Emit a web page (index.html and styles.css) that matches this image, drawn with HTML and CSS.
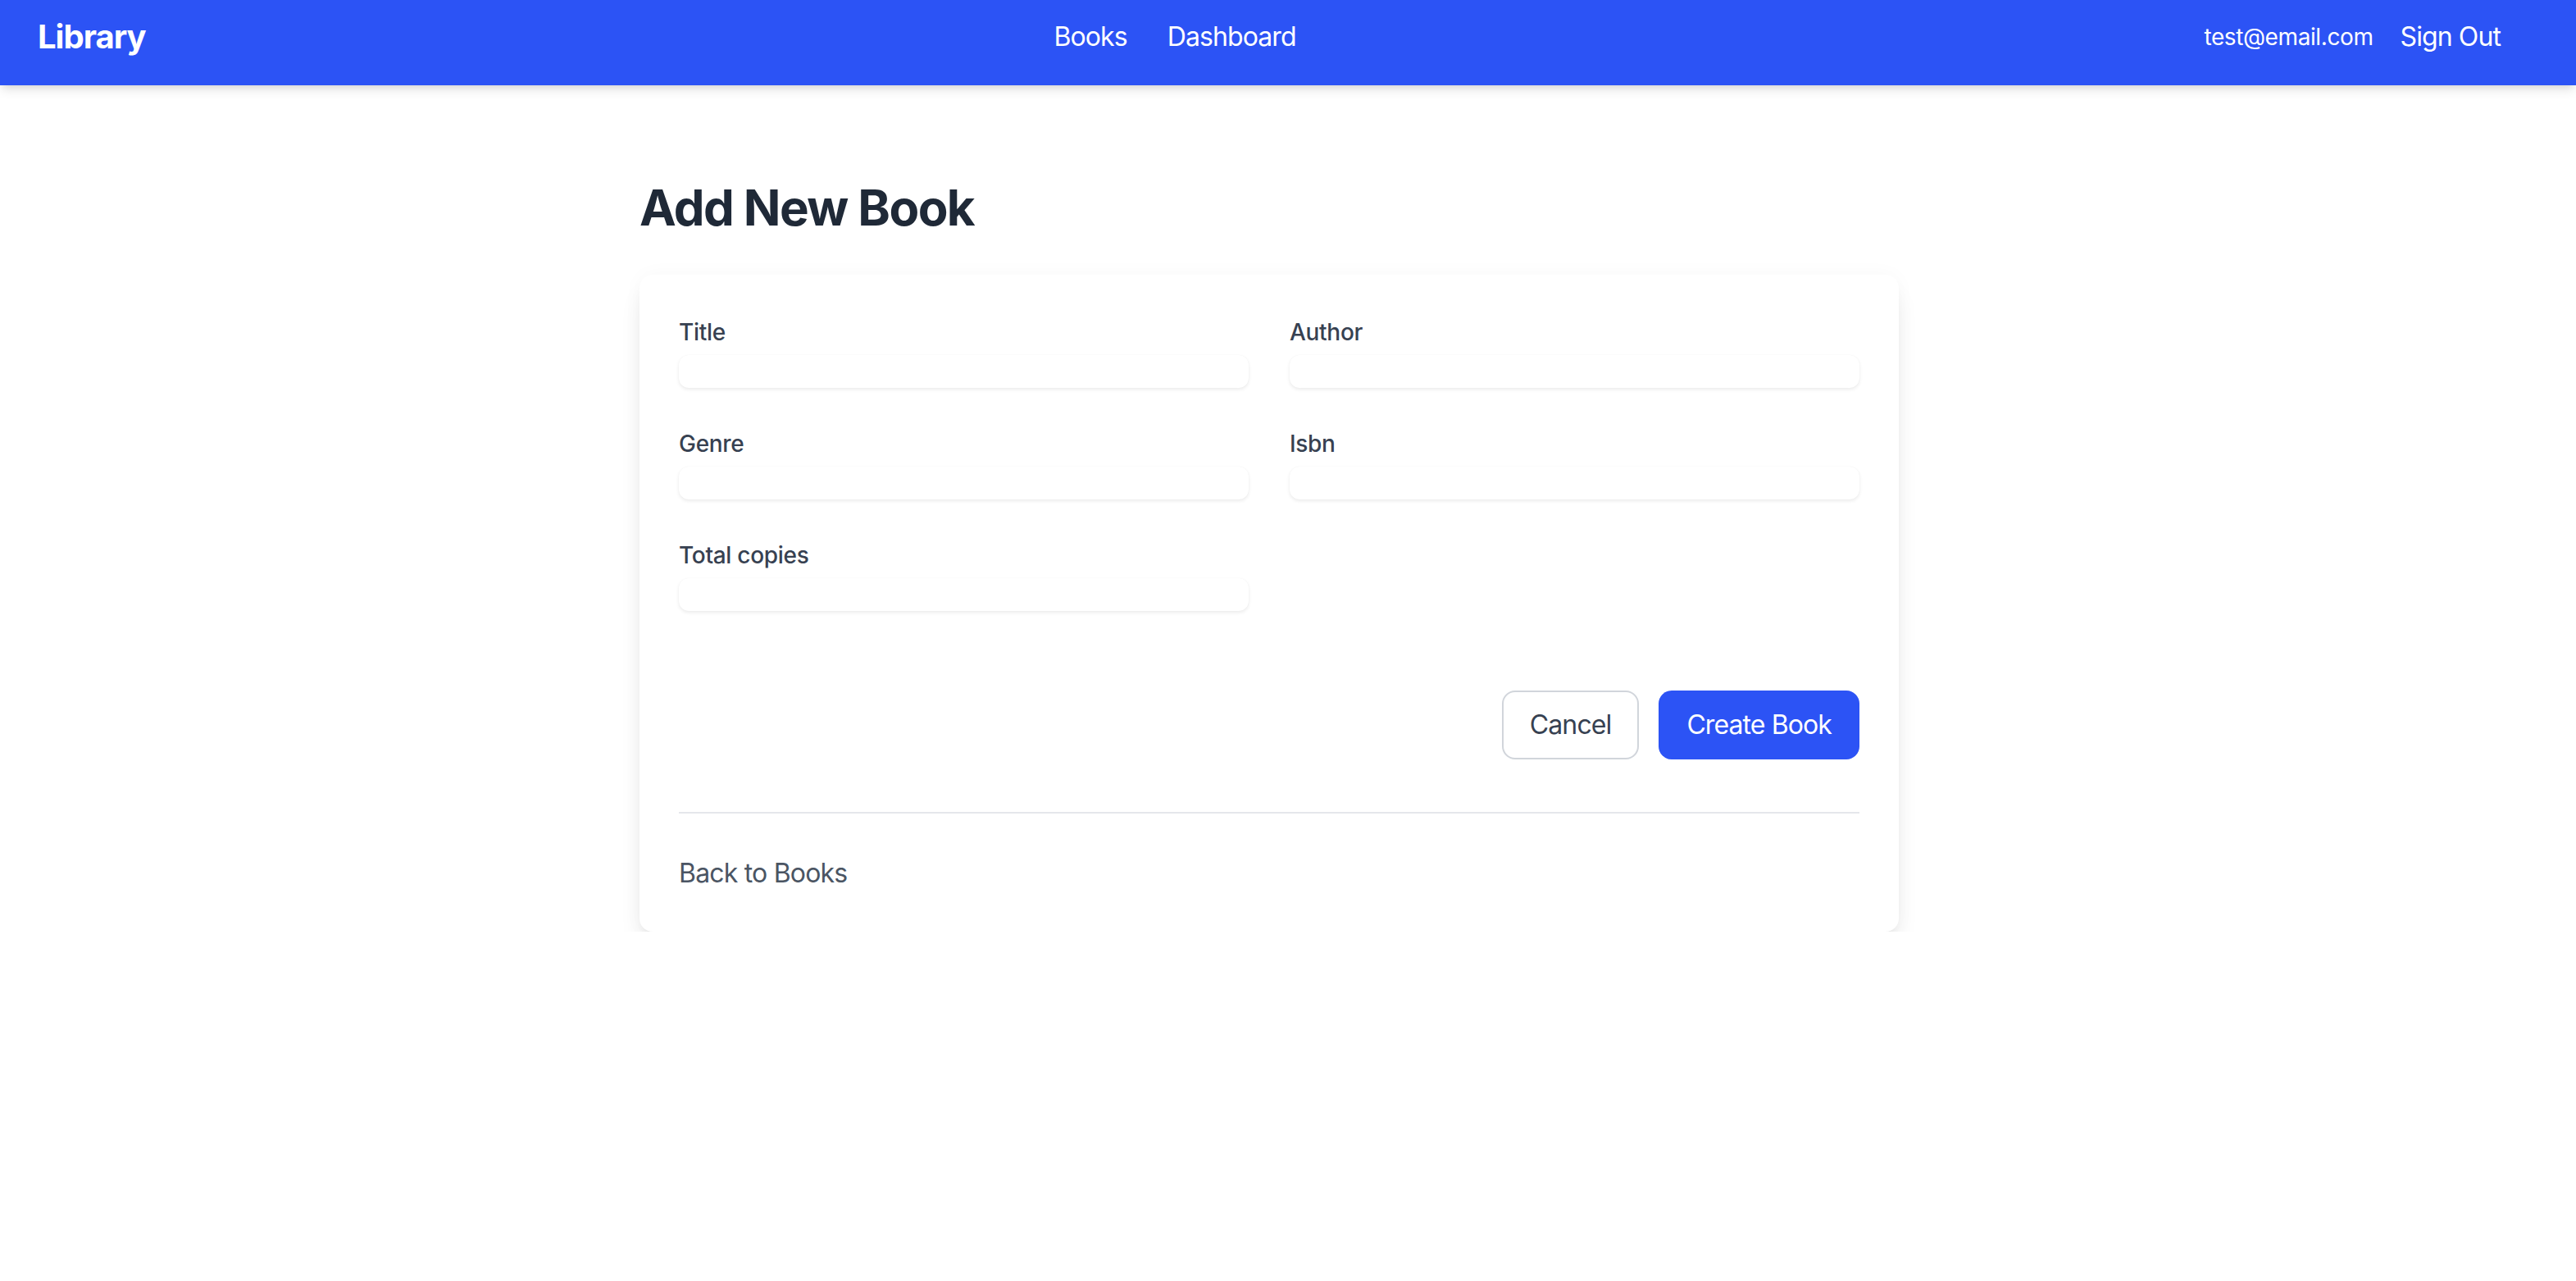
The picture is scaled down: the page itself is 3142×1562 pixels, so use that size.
FILE: index.html
```html
<!DOCTYPE html>
<html lang="en">
<head>
<meta charset="utf-8">
<title>Library - Add New Book</title>
<link rel="stylesheet" href="styles.css">
</head>
<body>
<header class="navbar">
  <a class="brand" href="#">Library</a>
  <nav class="nav-links">
    <a href="#">Books</a>
    <a href="#">Dashboard</a>
  </nav>
  <div class="nav-user">
    <span class="user-email">test@email.com</span>
    <a class="sign-out" href="#">Sign Out</a>
  </div>
</header>
<main class="main">
  <div class="container">
    <h1 class="page-title">Add New Book</h1>
    <section class="card">
      <form class="book-form">
        <div class="form-grid">
          <div class="field">
            <label for="title">Title</label>
            <input id="title" type="text">
          </div>
          <div class="field">
            <label for="author">Author</label>
            <input id="author" type="text">
          </div>
          <div class="field">
            <label for="genre">Genre</label>
            <input id="genre" type="text">
          </div>
          <div class="field">
            <label for="isbn">Isbn</label>
            <input id="isbn" type="text">
          </div>
          <div class="field">
            <label for="copies">Total copies</label>
            <input id="copies" type="text">
          </div>
        </div>
        <div class="actions">
          <a class="btn btn-secondary" href="#">Cancel</a>
          <button class="btn btn-primary" type="button">Create Book</button>
        </div>
      </form>
      <div class="card-footer">
        <a class="back-link" href="#">Back to Books</a>
      </div>
    </section>
  </div>
</main>
</body>
</html>
```

FILE: styles.css
```css
* { box-sizing: border-box; }
html, body { margin: 0; padding: 0; }
body {
  font-family: Inter, "Noto Sans", "Liberation Sans", sans-serif;
  background: #ffffff;
  color: #1f2937;
}
a { text-decoration: none; color: inherit; }

.navbar {
  height: 104px;
  background: #2c53f5;
  color: #ffffff;
  display: flex;
  align-items: center;
  justify-content: space-between;
  padding: 0 92px 14px 46px;
  box-shadow: 0 8px 12px -2px rgba(0,0,0,0.10), 0 4px 8px -4px rgba(0,0,0,0.10);
  position: relative;
  z-index: 1;
}
.brand {
  font-size: 40px;
  line-height: 56px;
  font-weight: 700;
  letter-spacing: -1px;
}
.nav-links {
  display: flex;
  gap: 49px;
  font-size: 32px;
  line-height: 48px;
  letter-spacing: -0.9px;
}
.nav-user {
  display: flex;
  align-items: center;
  gap: 33px;
}
.user-email {
  font-size: 28px;
  line-height: 40px;
  letter-spacing: -0.4px;
}
.sign-out {
  font-size: 32px;
  line-height: 48px;
  letter-spacing: -0.9px;
}

.main {
  padding: 113px 46px 0 0;
}
.container {
  width: 1536px;
  margin: 0 auto;
}
.page-title {
  margin: 0 0 46px;
  font-size: 60px;
  line-height: 72px;
  font-weight: 700;
  color: #1f2937;
  letter-spacing: -1.6px;
}
.card {
  background: #ffffff;
  border-radius: 16px;
  padding: 50px 48px 47px;
  box-shadow: 0 20px 30px -6px rgba(0,0,0,0.10), 0 8px 12px -8px rgba(0,0,0,0.10), 0 0 24px rgba(0,0,0,0.03);
}
.form-grid {
  display: grid;
  grid-template-columns: 1fr 1fr;
  column-gap: 50px;
  row-gap: 48px;
}
.field {
  display: flex;
  flex-direction: column;
}
.field label {
  font-size: 28px;
  line-height: 40px;
  font-weight: 500;
  color: #374151;
  letter-spacing: -0.3px;
}
.field input {
  margin-top: 8px;
  height: 40px;
  border: none;
  border-radius: 12px;
  background: #ffffff;
  box-shadow: 0 2px 4px rgba(0,0,0,0.08), 0 0 1px rgba(0,0,0,0.06);
  font: inherit;
  font-size: 28px;
  padding: 0 12px;
  outline: none;
}
.actions {
  margin-top: 97px;
  display: flex;
  justify-content: flex-end;
  gap: 24px;
}
.btn {
  font-family: inherit;
  font-size: 32px;
  line-height: 48px;
  letter-spacing: -0.9px;
  padding: 16px 32px;
  border-radius: 16px;
  border: 2px solid transparent;
  cursor: pointer;
}
.btn-secondary {
  background: #ffffff;
  border-color: #d1d5db;
  color: #374151;
}
.btn-primary {
  background: #2c53f5;
  color: #ffffff;
}
.card-footer {
  margin-top: 64px;
  border-top: 2px solid #e5e7eb;
  padding-top: 49px;
}
.back-link {
  font-size: 32px;
  line-height: 48px;
  color: #4b5563;
  letter-spacing: -0.8px;
}
```
